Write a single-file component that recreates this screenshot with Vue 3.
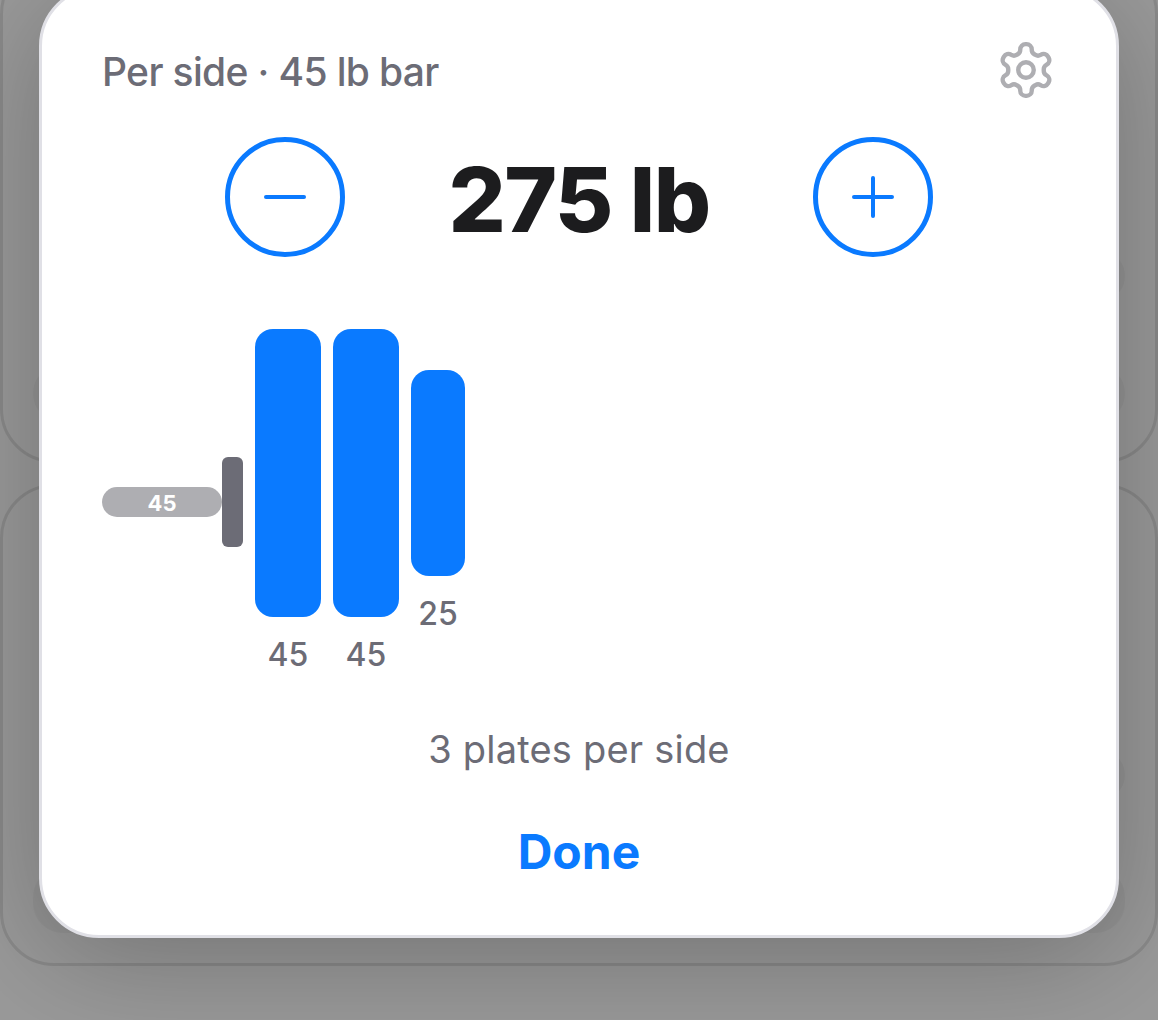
<template>
  <div class="screen">
    <!-- dimmed page behind the sheet -->
    <div class="backdrop">
      <section class="card card-top">
        <div class="slab slab-end slab-a"></div>
        <div class="slab slab-full slab-b"></div>
      </section>
      <section class="card card-bottom">
        <div class="slab slab-end slab-c"></div>
        <div class="slab slab-full slab-d"></div>
      </section>
    </div>

    <div class="overlay">
      <div class="dialog">
        <header class="dialog-head">
          <span class="dialog-title">Per side · 45 lb bar</span>
          <svg class="gear" viewBox="0 0 24 24" fill="none" stroke="currentColor" stroke-width="1.7" stroke-linecap="round" stroke-linejoin="round">
            <path d="M12.22 2h-.44a2 2 0 0 0-2 2v.18a2 2 0 0 1-1 1.73l-.43.25a2 2 0 0 1-2 0l-.15-.08a2 2 0 0 0-2.73.73l-.22.38a2 2 0 0 0 .73 2.73l.15.1a2 2 0 0 1 1 1.72v.51a2 2 0 0 1-1 1.74l-.15.09a2 2 0 0 0-.73 2.73l.22.38a2 2 0 0 0 2.73.73l.15-.08a2 2 0 0 1 2 0l.43.25a2 2 0 0 1 1 1.73V20a2 2 0 0 0 2 2h.44a2 2 0 0 0 2-2v-.18a2 2 0 0 1 1-1.73l.43-.25a2 2 0 0 1 2 0l.15.08a2 2 0 0 0 2.73-.73l.22-.39a2 2 0 0 0-.73-2.73l-.15-.08a2 2 0 0 1-1-1.74v-.5a2 2 0 0 1 1-1.74l.15-.09a2 2 0 0 0 .73-2.73l-.22-.38a2 2 0 0 0-2.73-.73l-.15.08a2 2 0 0 1-2 0l-.43-.25a2 2 0 0 1-1-1.73V4a2 2 0 0 0-2-2z" />
            <circle cx="12" cy="12" r="3" />
          </svg>
        </header>

        <div class="stepper">
          <button class="step-btn" type="button" aria-label="Decrease">
            <svg viewBox="0 0 60 60" width="60" height="60" fill="none" stroke="currentColor" stroke-width="4" stroke-linecap="round">
              <path d="M11 30h38" />
            </svg>
          </button>
          <span class="weight">{{ total }} lb</span>
          <button class="step-btn" type="button" aria-label="Increase">
            <svg viewBox="0 0 60 60" width="60" height="60" fill="none" stroke="currentColor" stroke-width="4" stroke-linecap="round">
              <path d="M11 30h38M30 11v38" />
            </svg>
          </button>
        </div>

        <div class="barbell">
          <div class="sleeve">{{ barWeight }}</div>
          <div class="collar"></div>
          <div class="plates">
            <div v-for="(plate, i) in plates" :key="i" class="plate-col">
              <div class="plate" :class="plate.size"></div>
              <span class="plate-label">{{ plate.weight }}</span>
            </div>
          </div>
        </div>

        <p class="summary">{{ plates.length }} plates per side</p>
        <button class="done" type="button">Done</button>
      </div>
    </div>
  </div>
</template>

<script setup>
const barWeight = 45
const plates = [
  { weight: 45, size: 'plate-lg' },
  { weight: 45, size: 'plate-lg' },
  { weight: 25, size: 'plate-md' }
]
const total = barWeight + plates.reduce((sum, p) => sum + p.weight * 2, 0)
</script>

<style>
html, body {
  margin: 0;
  background: #929292;
}
</style>

<style scoped>
.screen {
  position: relative;
  width: 1158px;
  height: 1020px;
  overflow: hidden;
  background: #9a9a9a;
  font-family: "Inter", "Liberation Sans", sans-serif;
}

.backdrop {
  display: flex;
  flex-direction: column;
  gap: 21px;
  height: 100%;
  margin-top: -40px;
}

.card {
  box-sizing: border-box;
  display: flex;
  flex-direction: column;
  border: 3px solid rgba(0, 0, 0, 0.1);
  border-radius: 54px;
  padding: 0 30px;
}

.card-top {
  height: 503px;
}

.card-bottom {
  height: 482px;
}

.slab {
  border-radius: 30px;
  background: rgba(0, 0, 0, 0.035);
}

.slab-end {
  align-self: flex-end;
  width: 200px;
}

.slab-a {
  height: 52px;
  margin-top: 287px;
}

.slab-b {
  height: 57px;
  margin-top: 63px;
}

.slab-c {
  height: 50px;
  margin-top: 263px;
}

.slab-d {
  height: 66px;
  margin-top: 67px;
}

.overlay {
  position: absolute;
  inset: 0;
  display: flex;
  justify-content: center;
  align-items: flex-start;
}

.dialog {
  box-sizing: border-box;
  width: 1080px;
  height: 952px;
  margin-top: -14px;
  padding: 54px 61px 0;
  display: flex;
  flex-direction: column;
  background: #fff;
  border: 3px solid #e0e0e6;
  border-radius: 60px;
  box-shadow: 0 20px 120px rgba(0, 0, 0, 0.26);
}

.dialog-head {
  display: flex;
  align-items: center;
  justify-content: space-between;
  height: 56px;
}

.dialog-title {
  margin-left: -1px;
  font-size: 39px;
  font-weight: 500;
  color: #6c6c76;
  letter-spacing: -0.65px;
}

.gear {
  width: 62px;
  height: 62px;
  margin-top: -2px;
  margin-right: -2px;
  color: #aeaeb2;
}

.stepper {
  display: flex;
  align-items: center;
  justify-content: center;
  gap: 84px;
  margin-top: 38px;
}

.step-btn {
  box-sizing: border-box;
  width: 120px;
  height: 120px;
  padding: 0;
  display: flex;
  align-items: center;
  justify-content: center;
  background: none;
  border: 5px solid #0a7aff;
  border-radius: 50%;
  color: #0a7aff;
}

.weight {
  width: 300px;
  padding-top: 6px;
  text-align: center;
  font-size: 90px;
  line-height: 1;
  font-weight: 800;
  color: #1c1c1e;
  letter-spacing: -1.6px;
}

.barbell {
  display: flex;
  align-items: center;
  margin-top: 72px;
  height: 346px;
}

.sleeve {
  width: 120px;
  height: 30px;
  border-radius: 15px;
  margin-left: -1px;
  background: #aeaeb2;
  color: #fff;
  font-size: 22px;
  font-weight: 700;
  line-height: 32px;
  text-align: center;
}

.collar {
  width: 21px;
  height: 90px;
  border-radius: 6px;
  background: #6c6c76;
}

.plates {
  display: flex;
  align-items: center;
  gap: 12px;
  margin-left: 12px;
}

.plate-col {
  display: flex;
  flex-direction: column;
  align-items: center;
  gap: 18px;
}

.plate {
  border-radius: 18px;
  background: #0a7aff;
}

.plate-lg {
  width: 66px;
  height: 288px;
}

.plate-md {
  width: 54px;
  height: 206px;
}

.plate-label {
  font-size: 32px;
  line-height: 40px;
  font-weight: 500;
  color: #6c6c76;
}

.summary {
  margin: 50px 0 0;
  text-align: center;
  font-size: 38px;
  line-height: 48px;
  font-weight: 400;
  color: #6c6c76;
  letter-spacing: 0.2px;
}

.done {
  margin: 49px auto 0;
  padding: 0;
  background: none;
  border: 0;
  font-family: inherit;
  font-size: 48px;
  line-height: 60px;
  font-weight: 700;
  color: #0a7aff;
}
</style>
